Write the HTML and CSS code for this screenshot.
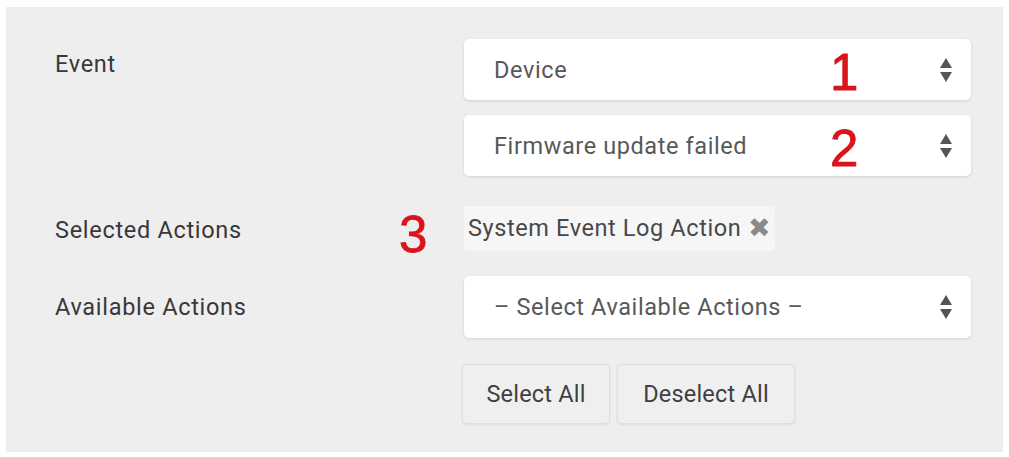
FILE: index.html
```html
<!DOCTYPE html>
<html>
<head>
<meta charset="utf-8">
<link rel="stylesheet" href="styles.css">
</head>
<body>
<div class="panel">
  <div class="row row-event">
    <div class="label">Event</div>
    <div class="controls">
      <div class="select">
        <span class="select-text">Device</span>
        <span class="mark">1</span>
        <svg class="arrows" width="14" height="26" viewBox="0 0 14 26"><path d="M7 1 L13 11 H1 Z" fill="#555"/><path d="M1 15 H13 L7 25 Z" fill="#555"/></svg>
      </div>
      <div class="select">
        <span class="select-text">Firmware update failed</span>
        <span class="mark">2</span>
        <svg class="arrows" width="14" height="26" viewBox="0 0 14 26"><path d="M7 1 L13 11 H1 Z" fill="#555"/><path d="M1 15 H13 L7 25 Z" fill="#555"/></svg>
      </div>
    </div>
  </div>
  <div class="row row-selected">
    <div class="label">Selected Actions</div>
    <div class="controls">
      <div class="chip-wrap">
        <span class="mark mark-3">3</span>
        <div class="chip">System Event Log Action <span class="chip-x">✖</span></div>
      </div>
    </div>
  </div>
  <div class="row row-available">
    <div class="label">Available Actions</div>
    <div class="controls">
      <div class="select select-avail">
        <span class="select-text">– Select Available Actions –</span>
        <svg class="arrows" width="14" height="26" viewBox="0 0 14 26"><path d="M7 1 L13 11 H1 Z" fill="#555"/><path d="M1 15 H13 L7 25 Z" fill="#555"/></svg>
      </div>
      <div class="buttons">
        <div class="btn btn-select">Select All</div>
        <div class="btn btn-deselect">Deselect All</div>
      </div>
    </div>
  </div>
</div>
</body>
</html>
```

FILE: styles.css
```css
html, body {
  margin: 0;
  padding: 0;
  background: #ffffff;
}
body {
  padding: 7px 6px 5px 6px;
  font-family: Roboto, "Liberation Sans", sans-serif;
}
.panel {
  background: #efeeef;
  height: 445px;
  box-sizing: border-box;
  padding: 32px 38px 0 49px;
}
.row {
  display: grid;
  grid-template-columns: 409px 507px;
}
.label {
  font-size: 23.5px;
  letter-spacing: 0.7px;
  color: #38383a;
  line-height: 28px;
}
.row-event .label {
  padding-top: 11px;
}
.controls {
  display: flex;
  flex-direction: column;
  gap: 15px;
}
.select {
  position: relative;
  height: 61px;
  background: #ffffff;
  border-radius: 5px;
  box-shadow: 0 1px 3px rgba(0,0,0,0.12);
  display: flex;
  align-items: center;
  padding: 0 16px 0 30px;
  box-sizing: border-box;
}
.select-avail {
  height: 62px;
  margin-top: 1px;
}
.select-text {
  flex: 1;
  font-size: 23.5px;
  letter-spacing: 0.6px;
  color: #58585a;
}
.arrows {
  display: block;
  margin-right: 2px;
}
.mark {
  font-family: "Liberation Sans", Arial, sans-serif;
  font-size: 51px;
  color: #d8141c;
  line-height: 1;
  -webkit-text-stroke: 0.8px #d8141c;
}
.select .mark {
  position: absolute;
  left: 366px;
  top: 8px;
}
.row-selected {
  margin-top: 30px;
}
.row-selected .label {
  padding-top: 10px;
}
.chip-wrap {
  position: relative;
}
.mark-3 {
  position: absolute;
  left: -65px;
  top: 3px;
}
.chip {
  display: inline-block;
  background: #f6f6f7;
  border-radius: 3px;
  padding: 9px 4px 10px 4px;
  font-size: 23.5px;
  letter-spacing: 0.6px;
  color: #48484a;
  line-height: 26px;
}
.chip-x {
  color: #8a8a8c;
  font-size: 27px;
  letter-spacing: 0;
  vertical-align: -1px;
}
.row-available {
  margin-top: 24px;
}
.row-available .label {
  padding-top: 18px;
}
.buttons {
  display: flex;
  gap: 7px;
  margin-top: 11px;
  margin-left: -2px;
}
.btn {
  height: 60px;
  box-sizing: border-box;
  border: 1px solid #e0dfe0;
  border-radius: 4px;
  background: #f0eff0;
  box-shadow: 0 1px 2px rgba(0,0,0,0.08);
  display: flex;
  align-items: center;
  justify-content: center;
  font-size: 23.5px;
  letter-spacing: 0.2px;
  color: #3f3f41;
}
.btn-select {
  width: 148px;
}
.btn-deselect {
  width: 178px;
}
```
